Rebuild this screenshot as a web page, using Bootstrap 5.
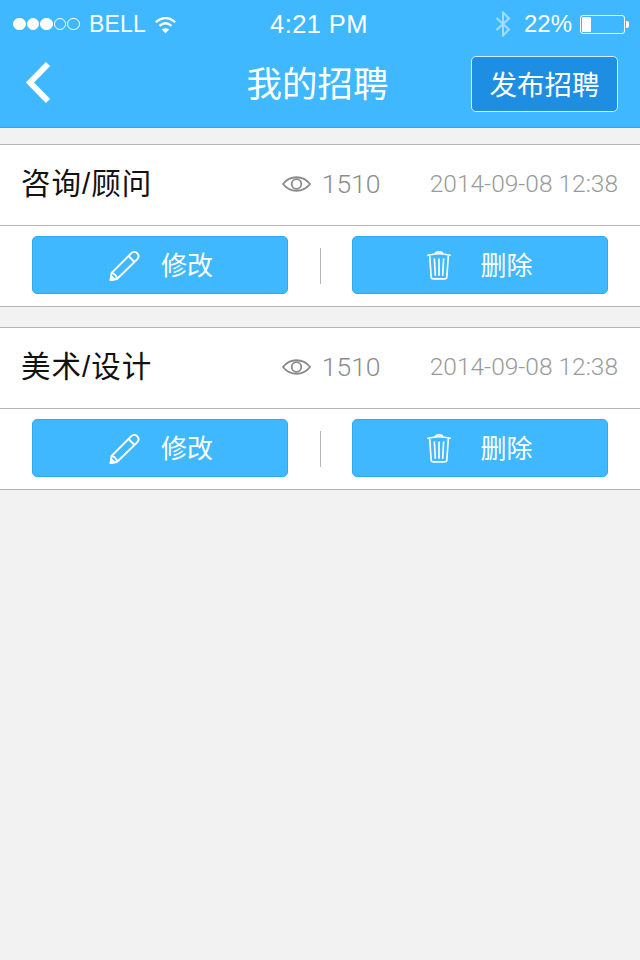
<!DOCTYPE html>
<html lang="zh">
<head>
<meta charset="utf-8">
<title>我的招聘</title>
<link href="https://cdn.jsdelivr.net/npm/bootstrap@5.3.0/dist/css/bootstrap.min.css" rel="stylesheet">
<style>
html,body{height:960px;overflow:hidden}
body{background:#f2f2f2;font-family:"Liberation Sans","Noto Sans CJK SC",sans-serif;color:#111}
.app-head{height:128px;background:#40b8ff;border-bottom:1px solid #2fa6ee;color:#fff}
.status-bar{height:48px;padding:0 11px 0 13px;position:relative}
.signal{width:12.7px;height:12.7px;border-radius:50%;border:1px solid #fff;margin-right:.9px}
.signal.on{background:#fff}
.carrier{font-size:23px;margin-left:8px;letter-spacing:.2px}
.clock{position:absolute;left:0;right:0;top:8px;text-align:center;font-size:25.5px;line-height:32px;letter-spacing:.4px;text-indent:-2px}
.batt-pct{font-size:24px;margin:0 8px 0 13px}
.batt{width:45px;height:19px;border:1px solid #fff;border-radius:3px;padding:1px;position:relative;margin-right:4px}
.batt i{display:block;width:9px;height:100%;background:#fff;border-radius:1px}
.batt::after{content:"";position:absolute;right:-5px;top:5px;width:3px;height:7px;background:#fff;border-radius:0 2px 2px 0}
.nav-row{height:79px;position:relative;padding:0 22px 0 24px}
.back-ico{margin-top:12px}
.nav-title{position:absolute;left:0;right:0;top:16px;text-align:center;font-size:35.5px;line-height:42px;margin:0;font-weight:400;text-indent:-5px}
.publish{width:147px;height:56px;background:#1e8ee3;border:1px solid #d5edff;border-radius:5px;color:#fff;font-size:27.5px;line-height:1;padding:3px 0 0;margin-top:8px}
.publish:hover{background:#1e8ee3;color:#fff}
.job{background:#fff;border-top:1px solid #b5b5b5;border-bottom:1px solid #b5b5b5;margin-bottom:20px}
.job:first-of-type{margin-top:16px}
.job-top{height:81px;padding:0 22px 2px 21px;border-bottom:1px solid #b5b5b5}
.job-name{font-size:29.5px;color:#111;line-height:1;margin:0;font-weight:400;letter-spacing:1px}
.views{color:#8b8b8b;font-size:26.5px;font-family:"Roboto","Liberation Sans",sans-serif;font-weight:300;margin-left:auto;width:98px;gap:11px}
.stamp{color:#9a9a9a;font-size:24.5px;font-family:"Roboto","Liberation Sans",sans-serif;font-weight:300;margin-left:50px;white-space:nowrap}
.job-bot{height:80px;padding:0 32px 2px}
.act{width:256px;height:58px;background:#40b8ff;border:1px solid #2ea9f2;border-radius:5px;color:#fff;font-size:26px;line-height:1;padding:0 0 0 2px;gap:21px}
.act span{padding-top:2px}
.act:hover{background:#40b8ff;color:#fff}
.act.act-del{gap:29px;padding:0}
.act svg{flex:none}
.vsep{width:1px;height:36px;background:#b5b5b5;margin-top:2px}
</style>
</head>
<body>
<header class="app-head">
  <div class="status-bar d-flex align-items-center">
    <div class="d-flex align-items-center">
      <span class="signal on"></span><span class="signal on"></span><span class="signal on"></span><span class="signal"></span><span class="signal"></span>
      <span class="carrier">BELL</span>
      <svg class="ms-2" width="23" height="19" viewBox="0 0 25 20" fill="none" stroke="#fff" stroke-width="2.4"><path d="M2 7.5C8.5 1.500 16.500 1.500 23 7.500"/><path d="M6 11.500C10 8 15 8 19 11.500"/><path d="M8.500 15.500 12.500 19.500 16.500 15.500C14 13.500 11 13.500 8.500 15.500Z" fill="#fff" stroke="none"/></svg>
    </div>
    <div class="clock">4:21 PM</div>
    <div class="d-flex align-items-center ms-auto">
      <svg width="16" height="26" viewBox="0 0 16 26" fill="none" stroke="#a4dcfd" stroke-width="2"><path d="M1.500 7 14 18.500 8 24.500V1.500L14 7.500 1.500 19"/></svg>
      <span class="batt-pct">22%</span>
      <span class="batt"><i></i></span>
    </div>
  </div>
  <div class="nav-row d-flex align-items-start justify-content-between">
    <svg class="back-ico" width="30" height="46" viewBox="0 0 30 46" fill="none" stroke="#fff" stroke-width="6"><path d="M24 4 6 22.500 24 41"/></svg>
    <h1 class="nav-title">我的招聘</h1>
    <button class="btn publish position-relative" type="button">发布招聘</button>
  </div>
</header>
<main>
  <section class="job">
    <div class="job-top d-flex align-items-center">
      <h2 class="job-name">咨询/顾问</h2>
      <div class="views d-flex align-items-center">
        <svg width="29" height="20" viewBox="0 0 29 20" fill="none" stroke="#8b8b8b" stroke-width="1.800" class="flex-shrink-0"><path d="M1 10C8 1 21 1 28 10 21 19 8 19 1 10Z"/><circle cx="14.500" cy="10" r="4.800"/></svg>
        <span>1510</span>
      </div>
      <span class="stamp">2014-09-08 12:38</span>
    </div>
    <div class="job-bot d-flex align-items-center justify-content-between">
      <button class="btn act d-flex align-items-center justify-content-center" type="button">
        <svg width="31" height="31" viewBox="0 0 31 31" fill="none" stroke="#fff" stroke-width="1.800" stroke-linejoin="round"><path d="M8 29 1.500 30 2.500 23 22 3.500C24 1.500 26 1.500 28 3 30 5 30 7.500 28 9.500Z"/><path d="M2.500 23C5 23 8 26 8 29M19.500 6 25.500 12"/><path d="M1.500 30 2.200 26 5.500 29.300Z" fill="#fff"/></svg>
        <span>修改</span>
      </button>
      <span class="vsep"></span>
      <button class="btn act act-del d-flex align-items-center justify-content-center" type="button">
        <svg width="24" height="32" viewBox="0 0 26 32" fill="none" stroke="#fff" stroke-width="1.800" stroke-linecap="round" stroke-linejoin="round"><path d="M1 5.500C8 3.500 18 3.500 25 5.500"/><path d="M9 4C9 1 17 1 17 4" /><path d="M3 7 4.500 29C4.600 30.500 6 31 7 31H19C20 31 21.400 30.500 21.500 29L23 7"/><path d="M8 9.500 9 27M13 9.500V27M18 9.500 17 27"/></svg>
        <span>删除</span>
      </button>
    </div>
  </section>
  <section class="job">
    <div class="job-top d-flex align-items-center">
      <h2 class="job-name">美术/设计</h2>
      <div class="views d-flex align-items-center">
        <svg width="29" height="20" viewBox="0 0 29 20" fill="none" stroke="#8b8b8b" stroke-width="1.800" class="flex-shrink-0"><path d="M1 10C8 1 21 1 28 10 21 19 8 19 1 10Z"/><circle cx="14.500" cy="10" r="4.800"/></svg>
        <span>1510</span>
      </div>
      <span class="stamp">2014-09-08 12:38</span>
    </div>
    <div class="job-bot d-flex align-items-center justify-content-between">
      <button class="btn act d-flex align-items-center justify-content-center" type="button">
        <svg width="31" height="31" viewBox="0 0 31 31" fill="none" stroke="#fff" stroke-width="1.800" stroke-linejoin="round"><path d="M8 29 1.500 30 2.500 23 22 3.500C24 1.500 26 1.500 28 3 30 5 30 7.500 28 9.500Z"/><path d="M2.500 23C5 23 8 26 8 29M19.500 6 25.500 12"/><path d="M1.500 30 2.200 26 5.500 29.300Z" fill="#fff"/></svg>
        <span>修改</span>
      </button>
      <span class="vsep"></span>
      <button class="btn act act-del d-flex align-items-center justify-content-center" type="button">
        <svg width="24" height="32" viewBox="0 0 26 32" fill="none" stroke="#fff" stroke-width="1.800" stroke-linecap="round" stroke-linejoin="round"><path d="M1 5.500C8 3.500 18 3.500 25 5.500"/><path d="M9 4C9 1 17 1 17 4" /><path d="M3 7 4.500 29C4.600 30.500 6 31 7 31H19C20 31 21.400 30.500 21.500 29L23 7"/><path d="M8 9.500 9 27M13 9.500V27M18 9.500 17 27"/></svg>
        <span>删除</span>
      </button>
    </div>
  </section>
</main>
<script src="https://cdn.jsdelivr.net/npm/bootstrap@5.3.0/dist/js/bootstrap.bundle.min.js"></script>
</body>
</html>
